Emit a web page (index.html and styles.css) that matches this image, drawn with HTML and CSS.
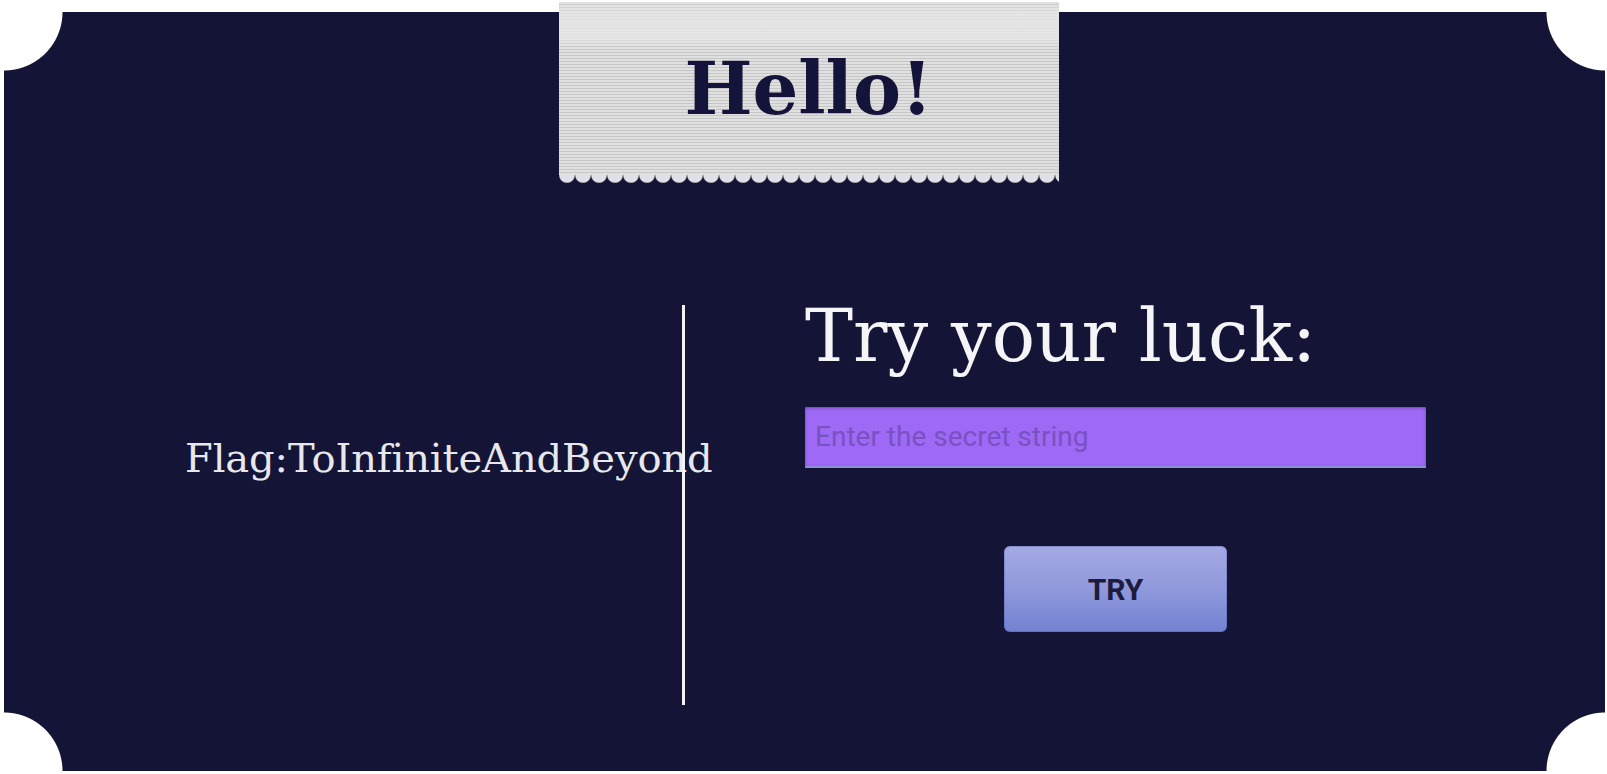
FILE: index.html
```html
<!DOCTYPE html>
<html lang="en">
<head>
<meta charset="utf-8">
<title>Hello!</title>
<link rel="stylesheet" href="styles.css">
</head>
<body>
<div class="ticket">
  <div class="tag"><h1 class="tag-title">Hello!</h1></div>
  <div class="main">
    <div class="left">Flag:ToInfiniteAndBeyond</div>
    <div class="divider"></div>
    <div class="right">
      <h2 class="luck">Try your luck:</h2>
      <input class="secret" type="text" placeholder="Enter the secret string">
      <button class="try" type="button">TRY</button>
    </div>
  </div>
</div>
</body>
</html>
```

FILE: styles.css
```css
html, body {
  margin: 0;
  padding: 0;
  background: #ffffff;
}

body {
  width: 1607px;
  height: 774px;
  overflow: hidden;
}

.ticket {
  margin: 12px 2px 3px 4px;
  height: 759px;
  display: flex;
  flex-direction: column;
  background:
    radial-gradient(circle at 0 0, #ffffff 58px, rgba(255,255,255,0) 59px),
    radial-gradient(circle at 100% 0, #ffffff 58px, rgba(255,255,255,0) 59px),
    radial-gradient(circle at 0 100%, #ffffff 58px, rgba(255,255,255,0) 59px),
    radial-gradient(circle at 100% 100%, #ffffff 58px, rgba(255,255,255,0) 59px),
    #141437;
}

.tag {
  align-self: center;
  margin: -10px 0 0 8px;
  width: 500px;
  height: 181px;
  box-sizing: border-box;
  padding-bottom: 8px;
  display: flex;
  align-items: center;
  justify-content: center;
  background:
    linear-gradient(to bottom,
      rgba(232,232,232,0) 0,
      rgba(232,232,232,0.75) 12px,
      rgba(232,232,232,0.75) 36px,
      rgba(232,232,232,0) 46px) top left / 100% 173px no-repeat,
    repeating-linear-gradient(to bottom, #e0e0e0 0 2px, #c6c6c6 2px 3px) top left / 100% 173px no-repeat,
    radial-gradient(circle at 50% 0, #dfe0e7 7.2px, rgba(223,224,231,0) 8.4px) left bottom / 16px 8px repeat-x;
}

.tag-title {
  margin: 0;
  font-family: "DejaVu Serif", serif;
  font-weight: bold;
  font-size: 72px;
  line-height: 72px;
  color: #14143a;
}

.main {
  margin-top: 122px;
  height: 400px;
  display: flex;
  align-items: flex-start;
}

.left {
  flex: none;
  width: 678px;
  box-sizing: border-box;
  padding: 133px 0 0 181px;
  white-space: nowrap;
  font-family: "DejaVu Serif", serif;
  font-size: 40px;
  line-height: 40px;
  letter-spacing: -0.1px;
  color: #e8e8ec;
}

.divider {
  flex: none;
  width: 3px;
  align-self: stretch;
  background: #f2f2f5;
}

.right {
  flex: none;
  width: 621px;
  margin: -5px 0 0 120px;
  display: flex;
  flex-direction: column;
}

.luck {
  margin: 0;
  font-family: "DejaVu Serif", serif;
  font-weight: normal;
  font-size: 72px;
  line-height: 72px;
  color: #f5f5f7;
  white-space: nowrap;
}

.secret {
  margin-top: 35px;
  width: 621px;
  height: 61px;
  box-sizing: border-box;
  padding: 0 10px;
  border: none;
  border-bottom: 2px solid #8d8fd6;
  border-radius: 1px;
  background: #9e69f5;
  box-shadow: inset 0 1px 3px rgba(40, 20, 90, 0.45);
  font-family: Roboto, "Liberation Sans", sans-serif;
  font-size: 28px;
  color: #3a2470;
  outline: none;
}

.secret::placeholder {
  color: #7852c2;
  opacity: 1;
}

.try {
  align-self: center;
  margin-top: 78px;
  width: 223px;
  height: 86px;
  border: none;
  border-radius: 6px;
  background: linear-gradient(to bottom, #a5aae2 0%, #8f98db 50%, #7282d2 100%);
  box-shadow: inset 0 0 0 1px rgba(80, 90, 170, 0.35);
  font-family: Roboto, "Liberation Sans", sans-serif;
  font-weight: bold;
  font-size: 30px;
  color: #1c1c3e;
  cursor: pointer;
}
```
